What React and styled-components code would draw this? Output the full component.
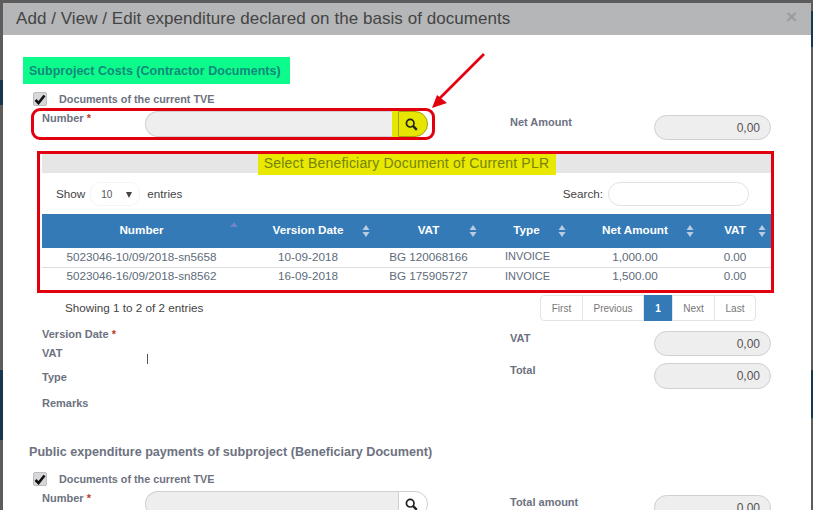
import React from "react";
import styled, { createGlobalStyle } from "styled-components";

const Global = createGlobalStyle`
  html, body { margin: 0; padding: 0; }
  body {
    width: 813px; height: 510px; overflow: hidden;
    font-family: "Liberation Sans", Arial, sans-serif;
    background-color: #5c5c5c;
    background-image:
      linear-gradient(#17374f, #17374f),
      linear-gradient(#17374f, #17374f),
      linear-gradient(#17374f, #17374f),
      linear-gradient(#17374f, #17374f);
    background-size: 3px 25px, 3px 70px, 3px 36px, 3px 48px;
    background-position: left 0 top 80px, left 0 top 370px, right 0 top 11px, right 0 top 370px;
    background-repeat: no-repeat;
  }
  * { box-sizing: border-box; }
`;

const Page = styled.div`
  position: relative;
  width: 813px;
  height: 510px;
  overflow: hidden;
  padding: 3px 2px 0 3px;
`;

const Modal = styled.div`
  background: #fff;
  height: 507px;
  overflow: hidden;
`;

const Header = styled.header`
  height: 32px;
  background: #b4b6b7;
  display: flex;
  align-items: center;
  justify-content: space-between;
  padding: 0 14px 0 13px;
`;

const Title = styled.h4`
  margin: 0;
  font-size: 17px;
  letter-spacing: 0.05px;
  font-weight: 400;
  color: #444;
`;

const Close = styled.span`
  font-size: 19px;
  font-weight: 700;
  color: #9a9c9d;
  line-height: 1;
  margin-top: -6px;
`;

const GreenHeading = styled.h5`
  margin: 22px 0 0 20px;
  width: 267px;
  height: 27px;
  background: #0dfb8b;
  color: #118a7c;
  font-size: 12.55px;
  font-weight: 700;
  line-height: 28px;
  padding-left: 6px;
`;

const CheckRow = styled.div`
  display: flex;
  align-items: center;
  gap: 12px;
  margin: ${(p) => p.$top}px 0 0 30px;
  height: 14px;
  font-size: 10.8px;
  font-weight: 700;
  color: #6d7280;
`;

const CheckBox = styled.span`
  width: 14px;
  height: 14px;
  border-radius: 2px;
  background: #d8d8da;
  border: 1px solid #bcbcbe;
  display: flex;
  align-items: center;
  justify-content: center;
`;

const FieldRow = styled.div`
  display: flex;
  align-items: flex-start;
  margin-top: 2px;
`;

const NumberBox = styled.div`
  display: flex;
  align-items: flex-start;
  margin-left: 28px;
  width: 404px;
  height: 32px;
  border: 3px solid ${(p) => (p.$marked ? "#e2000f" : "transparent")};
  border-radius: 9px;
  padding: 0 4px 0 8px;
`;

const Label = styled.label`
  display: block;
  font-size: 11px;
  font-weight: 700;
  line-height: 14px;
  color: #6d7280;
  white-space: nowrap;
`;

const Required = styled.span`
  color: #c0392b;
`;

const NumberLabel = styled(Label)`
  width: 103px;
`;

const InputGroup = styled.div`
  flex: none;
  display: flex;
  width: 283px;
  height: 26px;
`;

const LookupInput = styled.input`
  flex: 1;
  min-width: 0;
  height: 26px;
  background: #eeeeee;
  border: 1px solid #d0d0d0;
  border-right: 0;
  border-radius: 13px 0 0 13px;
  outline: none;
`;

const Marker = styled.span`
  width: 6px;
  background: #e6e600;
`;

const SearchButton = styled.button`
  flex: none;
  width: 30px;
  height: 26px;
  padding: 0 4px 0 0;
  background: ${(p) => (p.$marked ? "#e6e600" : "#fff")};
  border: 1px solid ${(p) => (p.$marked ? "#a3a30a" : "#cfcfcf")};
  border-radius: 0 13px 13px 0;
  display: flex;
  align-items: center;
  justify-content: center;
`;

const RightField = styled.div`
  display: flex;
  align-items: flex-start;
  width: 261px;
  margin: ${(p) => p.$top || 0}px 0 0 ${(p) => p.$left || 0}px;
`;

const RightLabel = styled(Label)`
  width: 144px;
  flex: none;
`;

const Amount = styled.input`
  width: 117px;
  height: ${(p) => p.$h || 25}px;
  background: #eeeeee;
  border: 1px solid #d0d0d0;
  border-radius: 13px;
  text-align: right;
  padding: 0 10px 0 0;
  font-family: inherit;
  font-size: 12px;
  color: #555;
  outline: none;
`;

const TableBox = styled.section`
  margin: 11px 0 0 34px;
  width: 737px;
  height: 142px;
  border: 3px solid #e2000f;
  padding-left: 2px;
`;

const TitleBar = styled.div`
  height: 19px;
  background: #e6e6e6;
  display: flex;
  justify-content: center;
`;

const Highlight = styled.div`
  width: 298px;
  height: 21px;
  background: #e8e800;
  color: #76830e;
  font-size: 14px;
  letter-spacing: 0.2px;
  line-height: 19px;
  text-align: center;
  white-space: nowrap;
`;

const Controls = styled.div`
  height: 41px;
  display: flex;
  align-items: center;
  padding: 0 22px 0 14px;
  font-size: 11.7px;
  color: #444;
`;

const SelectBox = styled.div`
  width: 50px;
  height: 24px;
  margin: 0 7px 0 5px;
  border: 1px solid #f4f4f4;
  border-radius: 10px;
  display: flex;
  align-items: center;
  justify-content: space-between;
  padding: 2px 7px 0 10px;
  font-size: 10px;
  color: #555;
`;

const Caret = styled.span`
  width: 0;
  height: 0;
  border-left: 3.5px solid transparent;
  border-right: 3.5px solid transparent;
  border-top: 6px solid #444;
`;

const SearchLabel = styled.span`
  margin-left: auto;
`;

const SearchInput = styled.input`
  width: 141px;
  height: 24px;
  margin-left: 5px;
  border: 1px solid #e2e2e2;
  border-radius: 12px;
  outline: none;
`;

const Table = styled.table`
  width: 729px;
  table-layout: fixed;
  border-collapse: collapse;
  font-size: 11.7px;
`;

const HeadCell = styled.th`
  position: relative;
  height: 34px;
  padding: 0 0 3px;
  background: #337ab7;
  color: #fff;
  font-weight: 700;
  text-align: center;
`;

const SortIcon = styled.svg`
  position: absolute;
  right: ${(p) => (p.$only ? 2 : 4)}px;
  top: ${(p) => (p.$only ? 7 : 10)}px;
`;

const Cell = styled.td`
  height: ${(p) => p.$h}px;
  padding: 0 0 ${(p) => (p.$line ? 3 : 1)}px;
  text-align: center;
  color: #5d6b7a;
  border-top: ${(p) => (p.$line ? "1px solid #ddd" : "0")};
`;

const TypeCell = styled(Cell)`
  font-size: 11px;
  padding: 0 0 ${(p) => (p.$line ? 3 : 2)}px 2px;
`;

const Footer = styled.div`
  display: flex;
  align-items: center;
  margin-top: 2px;
  height: 26px;
`;

const Showing = styled.div`
  width: 537px;
  padding: 0 0 2px 62px;
  font-size: 11.7px;
  color: #444;
`;

const Pagination = styled.nav`
  display: flex;
  height: 26px;
  border: 1px solid #e4e4e4;
  border-radius: 4px;
  font-size: 10px;
  color: #777;
`;

const PageItem = styled.span`
  width: ${(p) => p.$w}px;
  display: flex;
  align-items: center;
  justify-content: center;
  border-left: ${(p) => (p.$first ? "0" : "1px solid #e4e4e4")};
  margin: ${(p) => (p.$active ? "-1px 0" : "0")};
  background: ${(p) => (p.$active ? "#337ab7" : "transparent")};
  color: ${(p) => (p.$active ? "#fff" : "#777")};
  font-weight: ${(p) => (p.$active ? 700 : 400)};
`;

const Lower = styled.div`
  display: flex;
  align-items: flex-start;
`;

const LeftColumn = styled.div`
  width: 507px;
  padding: 6px 0 0 39px;
`;

const StackLabel = styled(Label)`
  margin-top: ${(p) => p.$top || 0}px;
`;

const VatLine = styled.div`
  display: flex;
  align-items: flex-start;
  margin-top: 5px;
`;

const VatLabel = styled(Label)`
  width: 105px;
`;

const TextCaret = styled.span`
  width: 1px;
  height: 10px;
  margin-top: 8px;
  background: #555;
`;

const RightColumn = styled.div`
  display: flex;
  flex-direction: column;
  gap: 7px;
  padding-top: 10px;
`;

const SectionHeading = styled.h5`
  margin: 33px 0 0 26px;
  font-size: 12.6px;
  line-height: 18px;
  font-weight: 700;
  color: #6d7280;
`;

const Arrow = styled.svg`
  position: absolute;
  left: 420px;
  top: 45px;
`;

const Check = () => (
  <svg width="12" height="11" viewBox="0 0 12 11">
    <path d="M1.5 6 L4.5 9 L10.5 1.5" fill="none" stroke="#111" strokeWidth="2.6" />
  </svg>
);

const Lens = () => (
  <svg width="13" height="13" viewBox="0 0 13 13">
    <circle cx="5.2" cy="5.2" r="3.8" fill="none" stroke="#222" strokeWidth="1.7" />
    <path d="M8.2 8.2 L11.8 11.8" stroke="#222" strokeWidth="2.4" />
  </svg>
);

const Sort = ({ only }) =>
  only ? (
    <SortIcon $only width="10" height="14" viewBox="0 0 10 14">
      <path d="M1 6 L5 1 L9 6 Z" fill="#6f83c6" />
    </SortIcon>
  ) : (
    <SortIcon width="10" height="14" viewBox="0 0 10 14">
      <path d="M1.5 6 L5 1 L8.5 6 Z M1.5 8 L5 13 L8.5 8 Z" fill="#b9cbe0" />
    </SortIcon>
  );

const columns = [
  ["Number", 199, true],
  ["Version Date", 134],
  ["VAT", 107],
  ["Type", 89],
  ["Net Amount", 128],
  ["VAT", 72],
];

const rows = [
  ["5023046-10/09/2018-sn5658", "10-09-2018", "BG 120068166", "INVOICE", "1,000.00", "0.00"],
  ["5023046-16/09/2018-sn8562", "16-09-2018", "BG 175905727", "INVOICE", "1,500.00", "0.00"],
];

const pages = [
  ["First", 41],
  ["Previous", 61],
  ["1", 29, true],
  ["Next", 42],
  ["Last", 41],
];

const Lookup = ({ marked }) => (
  <NumberBox $marked={marked}>
    <NumberLabel>
      Number <Required>*</Required>
    </NumberLabel>
    <InputGroup>
      <LookupInput readOnly />
      {marked && <Marker />}
      <SearchButton $marked={marked}>
        <Lens />
      </SearchButton>
    </InputGroup>
  </NumberBox>
);

export default function App() {
  return (
    <>
      <Global />
      <Page>
        <Modal>
          <Header>
            <Title>Add / View / Edit expenditure declared on the basis of documents</Title>
            <Close>×</Close>
          </Header>

          <GreenHeading>Subproject Costs (Contractor Documents)</GreenHeading>
          <CheckRow $top={8}>
            <CheckBox><Check /></CheckBox>
            Documents of the current TVE
          </CheckRow>
          <FieldRow>
            <Lookup marked />
            <RightField $top={7} $left={75}>
              <RightLabel>Net Amount</RightLabel>
              <Amount readOnly value="0,00" />
            </RightField>
          </FieldRow>

          <TableBox>
            <TitleBar>
              <Highlight>Select Beneficiary Document of Current PLR</Highlight>
            </TitleBar>
            <Controls>
              Show
              <SelectBox>10<Caret /></SelectBox>
              entries
              <SearchLabel>Search:</SearchLabel>
              <SearchInput readOnly />
            </Controls>
            <Table>
              <colgroup>
                {columns.map(([name, w]) => (
                  <col key={name + w} width={w} />
                ))}
              </colgroup>
              <thead>
                <tr>
                  {columns.map(([name, w, only]) => (
                    <HeadCell key={name + w}>
                      {name}
                      <Sort only={only} />
                    </HeadCell>
                  ))}
                </tr>
              </thead>
              <tbody>
                {rows.map((r, i) => (
                  <tr key={r[0]}>
                    {r.map((c, j) =>
                      j === 3 ? (
                        <TypeCell key={j} $h={i ? 20 : 19} $line={i > 0}>{c}</TypeCell>
                      ) : (
                        <Cell key={j} $h={i ? 20 : 19} $line={i > 0}>{c}</Cell>
                      )
                    )}
                  </tr>
                ))}
              </tbody>
            </Table>
          </TableBox>

          <Footer>
            <Showing>Showing 1 to 2 of 2 entries</Showing>
            <Pagination>
              {pages.map(([t, w, active], i) => (
                <PageItem key={t} $w={w} $active={active} $first={i === 0}>{t}</PageItem>
              ))}
            </Pagination>
          </Footer>

          <Lower>
            <LeftColumn>
              <Label>
                Version Date <Required>*</Required>
              </Label>
              <VatLine>
                <VatLabel>VAT</VatLabel>
                <TextCaret />
              </VatLine>
              <StackLabel $top={6}>Type</StackLabel>
              <StackLabel $top={12}>Remarks</StackLabel>
            </LeftColumn>
            <RightColumn>
              <RightField>
                <RightLabel>VAT</RightLabel>
                <Amount readOnly value="0,00" />
              </RightField>
              <RightField>
                <RightLabel>Total</RightLabel>
                <Amount readOnly value="0,00" $h={26} />
              </RightField>
            </RightColumn>
          </Lower>

          <SectionHeading>Public expenditure payments of subproject (Beneficiary Document)</SectionHeading>
          <CheckRow $top={11}>
            <CheckBox><Check /></CheckBox>
            Documents of the current TVE
          </CheckRow>
          <FieldRow>
            <Lookup />
            <RightField $top={7} $left={75}>
              <RightLabel>Total amount</RightLabel>
              <Amount readOnly value="0,00" />
            </RightField>
          </FieldRow>
        </Modal>
        <Arrow width="70" height="70" viewBox="0 0 70 70">
          <path d="M64 9 L19 54" stroke="#e2000f" strokeWidth="2.6" fill="none" />
          <path d="M12 63 L17 50 L27 58 Z" fill="#e2000f" />
        </Arrow>
      </Page>
    </>
  );
}
